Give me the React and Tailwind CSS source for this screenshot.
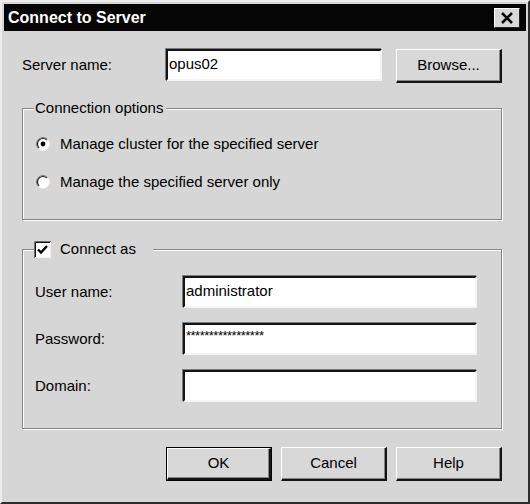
const FONT = "font-['Liberation_Sans',Arial,sans-serif]";

function Field({ children, className = "" }) {
  return (
    <div
      className={`h-[32px] bg-white border-2 border-t-[#141414] border-l-[#141414] border-r-[#f4f4f4] border-b-[#f4f4f4] shadow-[-1px_-1px_0_#7c7c7c] flex items-center pl-[1px] pb-[2px] text-[15px] text-black ${className}`}
    >
      {children}
    </div>
  );
}

function Button({ children, isDefault }) {
  return (
    <div className={`w-[106px] h-[34px] ${isDefault ? "border border-black" : ""}`}>
      <div className="h-full border-t border-l border-r-2 border-b-2 border-t-white border-l-white border-r-[#141414] border-b-[#141414] shadow-[inset_-1px_-1px_0_#858585] bg-[#d8d8d8] flex items-center justify-center text-[15px] text-black">
        {children}
      </div>
    </div>
  );
}

function Radio({ checked }) {
  return (
    <svg width="14" height="14" viewBox="0 0 14 14" className="shrink-0">
      <circle cx="7" cy="7" r="6.5" fill="#fff" />
      <path d="M2.4 11.6 A6.5 6.5 0 0 1 11.6 2.4" stroke="#7a7a7a" strokeWidth="1" fill="none" />
      <path d="M3.1 10.9 A5.5 5.5 0 0 1 10.9 3.1" stroke="#202020" strokeWidth="1.2" fill="none" />
      <path d="M11.6 2.4 A6.5 6.5 0 0 1 2.4 11.6" stroke="#ececec" strokeWidth="1" fill="none" />
      {checked && <circle cx="7" cy="7" r="2.4" fill="#000" />}
    </svg>
  );
}

function Checkbox() {
  return (
    <svg width="17" height="17" viewBox="0 0 17 17" className="shrink-0">
      <rect x="0" y="0" width="17" height="17" fill="#f2f2f2" />
      <rect x="2" y="2" width="14" height="14" fill="#fff" />
      <path d="M0.5 17 V0.5 H17" stroke="#6e6e6e" strokeWidth="1" fill="none" />
      <path d="M1.5 16 V1.5 H16" stroke="#111" strokeWidth="1" fill="none" />
      <path d="M4 8.5 L7 11.5 L13 5" stroke="#000" strokeWidth="2.4" fill="none" />
    </svg>
  );
}

export default function App() {
  return (
    <div className={`${FONT} w-[530px] h-[504px] bg-[#d6d6d6] border-2 border-t-[#ececec] border-l-[#ececec] border-r-[#2e2e2e] border-b-[#2e2e2e] p-[2px] text-black`}>
      {/* title bar */}
      <div className="h-[27px] bg-[#050505] flex items-center justify-between pl-[4px] pr-[6px]">
        <span className="text-white font-bold text-[16px] leading-none">Connect to Server</span>
        <div className="w-[26px] h-[20px] bg-[#d8d8d8] border-t border-l border-r border-b border-t-white border-l-white border-r-[#222] border-b-[#222] flex items-center justify-center">
          <svg width="14" height="12" viewBox="0 0 14 12">
            <path d="M2 1 L12 11 M12 1 L2 11" stroke="#000" strokeWidth="2.6" />
          </svg>
        </div>
      </div>

      <div className="pl-[18px] pr-[24px]">
        {/* server row */}
        <div className="mt-[18px] flex items-start">
          <div className="w-[144px] h-[32px] flex items-center text-[15px]">Server name:</div>
          <Field className="w-[216px]">opus02</Field>
          <div className="ml-auto">
            <Button>Browse...</Button>
          </div>
        </div>

        {/* connection options */}
        <fieldset className="mt-[16px] border border-[#868686] shadow-[inset_1px_1px_0_#fff,1px_1px_0_#fff] px-[11px] pb-[27px]">
          <legend className="pl-[1px] pr-[3px] h-[18px] leading-[18px] text-[15px] bg-[#d6d6d6]">
            Connection options
          </legend>
          <div className="mt-[17px] h-[20px] flex items-center gap-[10px] pl-[2px] text-[15px]">
            <Radio checked />
            <span>Manage cluster for the specified server</span>
          </div>
          <div className="mt-[18px] h-[20px] flex items-center gap-[10px] pl-[2px] text-[15px]">
            <Radio />
            <span>Manage the specified server only</span>
          </div>
        </fieldset>

        {/* connect as */}
        <fieldset className="mt-[20px] border border-[#868686] shadow-[inset_1px_1px_0_#fff,1px_1px_0_#fff] px-[11px] pb-[26px]">
          <legend className="pr-[17px] h-[18px] flex items-center gap-[9px] text-[15px] bg-[#d6d6d6]">
            <Checkbox />
            <span>Connect as</span>
          </legend>
          <div className="mt-[18px] flex flex-col gap-[15px] pl-[1px]">
            <div className="flex items-center">
              <div className="w-[148px] text-[15px]">User name:</div>
              <Field className="w-[294px]">administrator</Field>
            </div>
            <div className="flex items-center">
              <div className="w-[148px] text-[15px]">Password:</div>
              <Field className="w-[294px]">
                <span className="text-[13px] tracking-[-0.5px] leading-none pb-[6px]">*****************</span>
              </Field>
            </div>
            <div className="flex items-center">
              <div className="w-[148px] text-[15px]">Domain:</div>
              <Field className="w-[294px]" />
            </div>
          </div>
        </fieldset>

        {/* buttons */}
        <div className="mt-[18px] flex justify-end gap-[9px]">
          <Button isDefault>OK</Button>
          <Button>Cancel</Button>
          <Button>Help</Button>
        </div>
      </div>
    </div>
  );
}
